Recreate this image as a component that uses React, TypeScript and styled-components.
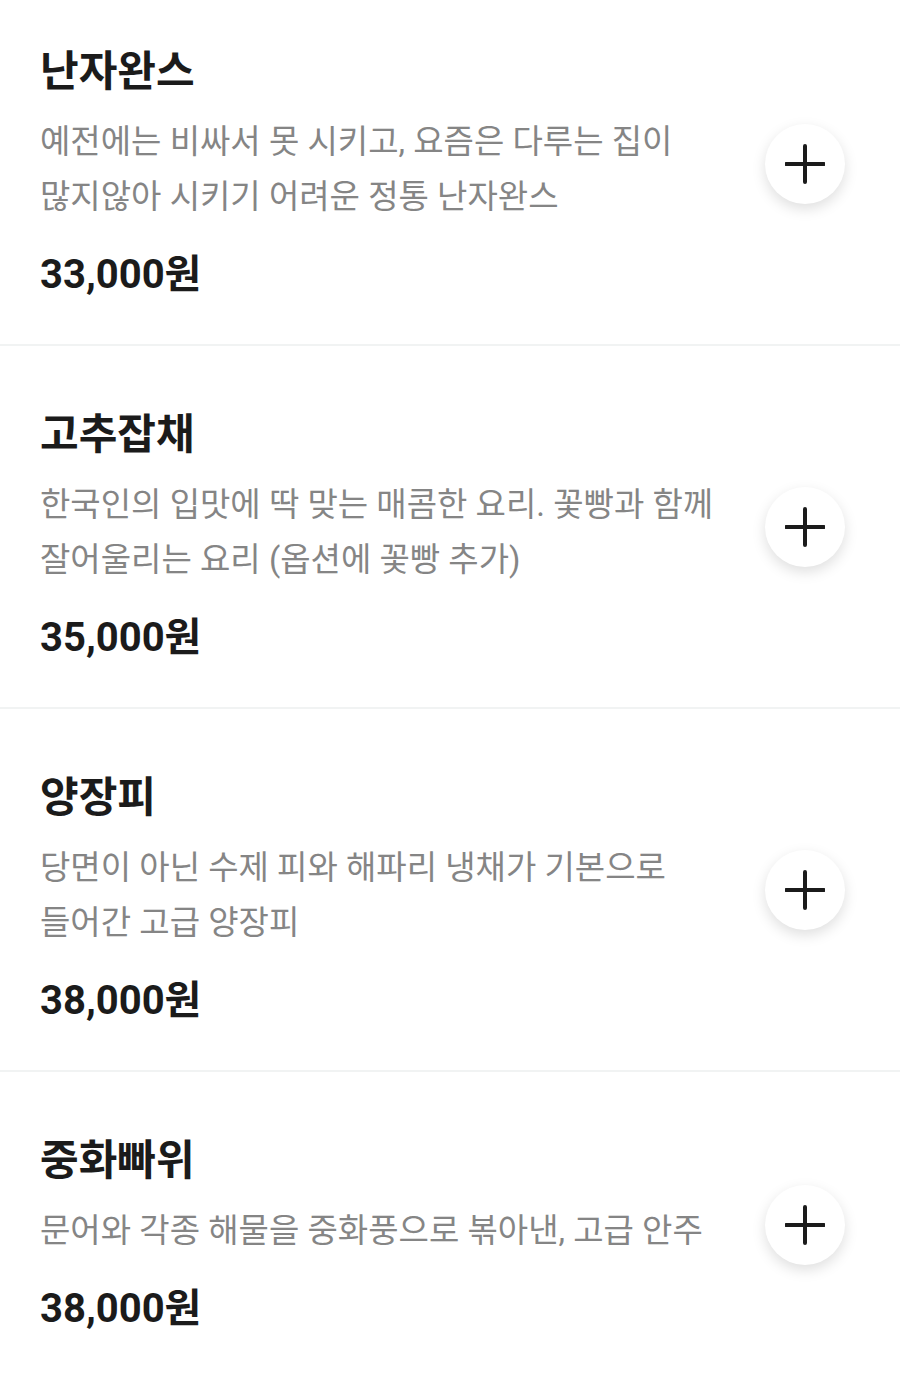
import styled, { createGlobalStyle } from 'styled-components';

const GlobalStyle = createGlobalStyle`
    body {
        margin: 0;
        background: #ffffff;
        font-family: Roboto, "Noto Sans CJK KR", sans-serif;
        overflow: hidden;
    }
`

// list is scrolled a little, so the first item is cut at the top
const MenuList = styled.ul`
    list-style: none;
    margin: -17px 0 0;
    padding: 0;
`

const MenuItem = styled.li`
    display: flex;
    align-items: center;
    padding: 0 55px 0 40px;
    border-bottom: 2px solid #f1f3f3;
`

const Info = styled.div`
    flex: 1;
    min-width: 0;
    padding: 63px 0 45px;
`

const Name = styled.h3`
    margin: 0;
    font-size: 42px;
    line-height: 48px;
    font-weight: 700;
    color: #1b1b1b;
    padding-top: 2px;
    margin-bottom: -2px;
`

const Desc = styled.p`
    margin: 20px 0 0;
    font-size: 33px;
    line-height: 55px;
    font-weight: 400;
    color: #858585;
    white-space: pre-line;
`

const Price = styled.div`
    margin-top: 27px;
    font-size: 40px;
    line-height: 48px;
    font-weight: 700;
    color: #1b1b1b;
`

const AddButton = styled.button`
    flex: none;
    width: 80px;
    height: 80px;
    border-radius: 50%;
    border: none;
    background: #ffffff;
    box-shadow: 0 5px 14px rgba(0, 0, 0, 0.13);
    display: flex;
    align-items: center;
    justify-content: center;
    padding: 0;
    margin-left: 20px;
`

const menus = [
    {
        name: '난자완스',
        desc: '예전에는 비싸서 못 시키고, 요즘은 다루는 집이\n많지않아 시키기 어려운 정통 난자완스',
        price: '33,000원',
    },
    {
        name: '고추잡채',
        desc: '한국인의 입맛에 딱 맞는 매콤한 요리. 꽃빵과 함께\n잘어울리는 요리 (옵션에 꽃빵 추가)',
        price: '35,000원',
    },
    {
        name: '양장피',
        desc: '당면이 아닌 수제 피와 해파리 냉채가 기본으로\n들어간 고급 양장피',
        price: '38,000원',
    },
    {
        name: '중화빠위',
        desc: '문어와 각종 해물을 중화풍으로 볶아낸, 고급 안주',
        price: '38,000원',
    },
]

function PlusIcon() {
    return (
        <svg width="40" height="40" viewBox="0 0 40 40">
            <path d="M20 2v36M1 20h38" stroke="#1b1b1b" strokeWidth="4" strokeLinecap="round" fill="none" />
        </svg>
    )
}

function App() {
    return (
        <>
            <GlobalStyle />
            <MenuList>
                {menus.map((m) => (
                    <MenuItem key={m.name}>
                        <Info>
                            <Name>{m.name}</Name>
                            <Desc>{m.desc}</Desc>
                            <Price>{m.price}</Price>
                        </Info>
                        <AddButton aria-label="추가">
                            <PlusIcon />
                        </AddButton>
                    </MenuItem>
                ))}
            </MenuList>
        </>
    )
}

export default App
